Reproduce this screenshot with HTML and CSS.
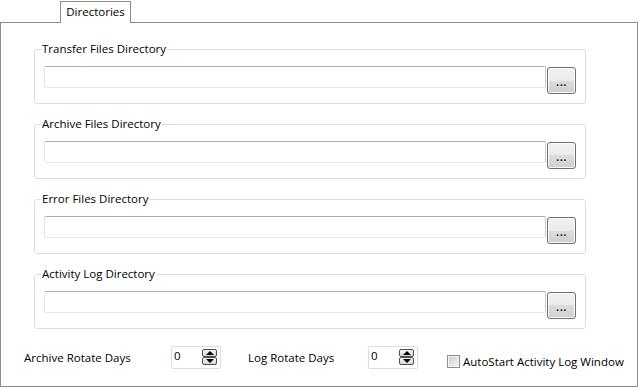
FILE: index.html
```html
<!DOCTYPE html>
<html>
<head>
<meta charset="utf-8">
<link rel="stylesheet" href="styles.css">
</head>
<body>
<div class="tabs"><div class="tab">Directories</div></div>
<div class="panel">
  <fieldset class="group">
    <legend>Transfer Files Directory</legend>
    <div class="row"><div class="path"></div><button class="browse">...</button></div>
  </fieldset>
  <fieldset class="group">
    <legend>Archive Files Directory</legend>
    <div class="row"><div class="path"></div><button class="browse">...</button></div>
  </fieldset>
  <fieldset class="group">
    <legend>Error Files Directory</legend>
    <div class="row"><div class="path"></div><button class="browse">...</button></div>
  </fieldset>
  <fieldset class="group">
    <legend>Activity Log Directory</legend>
    <div class="row"><div class="path"></div><button class="browse">...</button></div>
  </fieldset>
  <div class="options">
    <span class="opt-label first">Archive Rotate Days</span>
    <div class="spin"><span class="spin-val">0</span><div class="spin-btns"><span class="spin-btn up"></span><span class="spin-btn down"></span></div></div>
    <span class="opt-label second">Log Rotate Days</span>
    <div class="spin"><span class="spin-val">0</span><div class="spin-btns"><span class="spin-btn up"></span><span class="spin-btn down"></span></div></div>
    <div class="check"><span class="box"></span><span class="check-label">AutoStart Activity Log Window</span></div>
  </div>
</div>
</body>
</html>
```
FILE: styles.css
```css
html, body {
  margin: 0;
  padding: 0;
}
body {
  width: 642px;
  height: 390px;
  overflow: hidden;
  background: #ffffff;
  font-family: "Open Sans", "Liberation Sans", sans-serif;
  font-size: 11.5px;
  color: #000;
}
.tabs {
  height: 22px;
  display: flex;
  align-items: flex-end;
  padding-left: 60px;
}
.tab {
  position: relative;
  z-index: 1;
  width: 71px;
  height: 22px;
  margin-bottom: -1px;
  box-sizing: border-box;
  border: 1px solid #898c95;
  border-bottom: none;
  background: #fff;
  text-align: center;
  line-height: 19px;
}
.panel {
  width: 638px;
  height: 365px;
  box-sizing: border-box;
  border: 1px solid #898c95;
  padding-top: 19px;
}
.group {
  width: 552px;
  min-width: 0;
  box-sizing: border-box;
  margin: 0 0 13px 33px;
  padding: 10px 9px 9px;
  border: 1px solid #d5dfe5;
  border-radius: 3px;
}
.group legend {
  padding: 0 1px;
  margin-left: -3px;
  line-height: 14px;
}
.row {
  display: flex;
  align-items: flex-start;
}
.path {
  width: 502px;
  height: 22px;
  box-sizing: border-box;
  border: 1px solid;
  border-color: #abadb3 #c9ccd2 #e3e9ef #e2e3ea;
  border-radius: 2px;
  background: #fff;
}
.browse {
  width: 29px;
  height: 27px;
  margin: 1px 0 0 1px;
  padding: 1px 0 0;
  box-sizing: border-box;
  border: 1px solid #707070;
  border-radius: 3px;
  background: linear-gradient(#f2f2f2 0%, #ebebeb 50%, #dddddd 50%, #cfcfcf 100%);
  box-shadow: inset 0 0 0 1px #fbfbfb;
  font-family: "Open Sans", "Liberation Sans", sans-serif;
  font-size: 11px;
  font-weight: 700;
  line-height: 15px;
  color: #1a1a3a;
  letter-spacing: 0.5px;
}
.group:last-of-type {
  margin-bottom: 0;
}
.options {
  display: flex;
  align-items: center;
  height: 23px;
  margin-top: 17px;
  padding-left: 23px;
}
.opt-label.first {
  width: 147px;
}
.opt-label.second {
  width: 120px;
  margin-left: 27px;
}
.spin {
  width: 50px;
  height: 23px;
  box-sizing: border-box;
  border: 1px solid #dadde2;
  border-radius: 2px;
  display: flex;
  justify-content: space-between;
  align-items: flex-start;
  padding: 1px 3px 0 2px;
  background: #fff;
}
.spin-val {
  line-height: 15px;
}
.spin-btns {
  display: flex;
  flex-direction: column;
  padding-top: 1px;
}
.spin-btn {
  width: 15px;
  height: 8px;
  box-sizing: border-box;
  border: 1px solid #4f4f4f;
  border-radius: 2px;
  background: linear-gradient(#f6f6f6, #d6d6d6);
  display: flex;
  align-items: center;
  justify-content: center;
}
.spin-btn::after {
  content: "";
  width: 0;
  height: 0;
  border-left: 4px solid transparent;
  border-right: 4px solid transparent;
}
.spin-btn.up::after {
  border-bottom: 4px solid #000;
}
.spin-btn.down::after {
  border-top: 4px solid #000;
}
.check {
  display: flex;
  align-items: center;
  align-self: flex-end;
  margin-left: 29px;
  margin-bottom: 0;
}
.box {
  width: 13px;
  height: 13px;
  box-sizing: border-box;
  border: 1px solid #8e8f8f;
  background: linear-gradient(135deg, #c9cdd3 0%, #eeeeee 80%, #f6f6f6 100%);
  box-shadow: inset 0 0 0 1px #f4f4f4;
}
.check-label {
  margin-left: 3px;
  line-height: 15px;
}
```
